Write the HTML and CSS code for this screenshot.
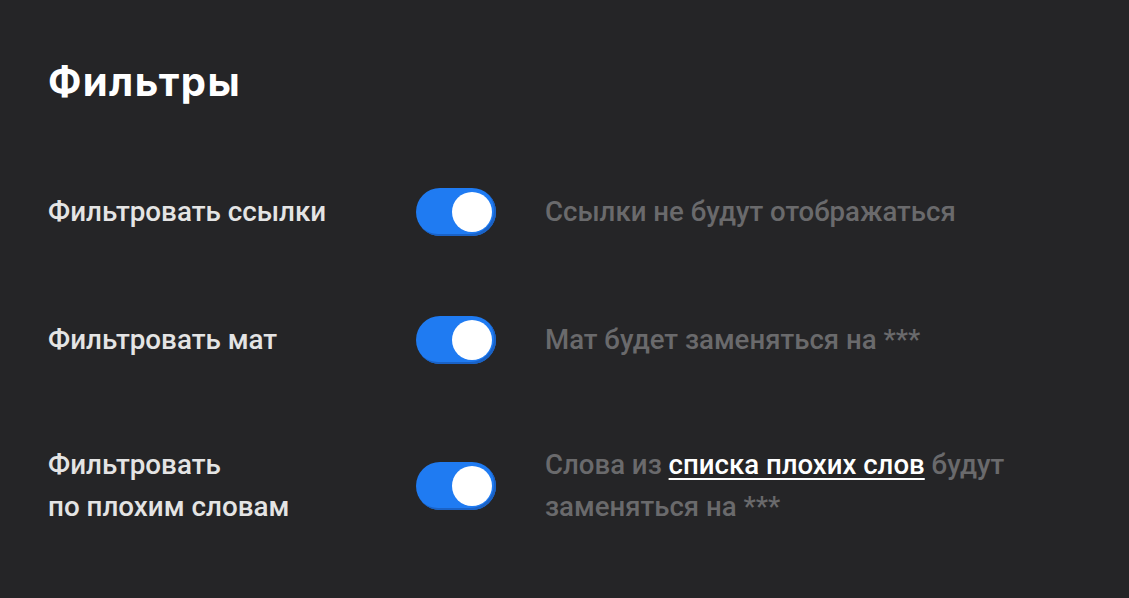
FILE: index.html
```html
<!DOCTYPE html>
<html lang="ru">
<head>
  <meta charset="UTF-8">
  <meta name="viewport" content="width=device-width, initial-scale=1.0">
  <title>Фильтры</title>
  <link rel="stylesheet" href="styles.css">
</head>
<body>
  <div class="filters">
    <h1 class="filters-title">Фильтры</h1>

    <div class="filter-row">
      <div class="filter-label">Фильтровать ссылки</div>
      <label class="switch">
        <input type="checkbox" checked>
        <span class="switch-track"></span>
      </label>
      <div class="filter-desc">Ссылки не будут отображаться</div>
    </div>

    <div class="filter-row">
      <div class="filter-label">Фильтровать мат</div>
      <label class="switch">
        <input type="checkbox" checked>
        <span class="switch-track"></span>
      </label>
      <div class="filter-desc">Мат будет заменяться на ***</div>
    </div>

    <div class="filter-row">
      <div class="filter-label">Фильтровать<br>по плохим словам</div>
      <label class="switch">
        <input type="checkbox" checked>
        <span class="switch-track"></span>
      </label>
      <div class="filter-desc">Слова из <a href="#" class="filter-link">списка плохих слов</a> будут<br>заменяться на ***</div>
    </div>
  </div>
</body>
</html>
```

FILE: styles.css
```css
body {
  margin: 0;
  padding: 0;
  background-color: #252527;
  font-family: 'Liberation Sans', Arial, sans-serif;
  -webkit-font-smoothing: antialiased;
}

.filters {
  padding: 58px 48px 0;
}

.filters-title {
  margin: 0 0 82px;
  font-family: 'Inter', sans-serif;
  font-weight: 700;
  font-size: 40px;
  line-height: 48px;
  color: #ffffff;
  letter-spacing: 1.4px;
}

.filter-row {
  display: flex;
  align-items: center;
  margin-bottom: 80px;
}

.filter-label {
  width: 368px;
  flex-shrink: 0;
  font-family: 'Roboto', sans-serif;
  font-weight: 500;
  font-size: 27.8px;
  line-height: 42px;
  color: #e4e4e4;
}

/* toggle */
.switch {
  position: relative;
  display: block;
  width: 80px;
  height: 48px;
  flex-shrink: 0;
}

.switch input {
  display: none;
}

.switch-track {
  position: absolute;
  top: 0;
  left: 0;
  width: 100%;
  height: 100%;
  border-radius: 24px;
  background-color: #1f7bf2;
  box-shadow: inset -2px -2px 0 #1a62c6;
}

.switch-track::after {
  content: '';
  position: absolute;
  top: 4px;
  left: 36px;
  width: 40px;
  height: 40px;
  border-radius: 50%;
  background-color: #ffffff;
}

.filter-desc {
  margin-left: 49px;
  font-family: 'Roboto', sans-serif;
  font-weight: 500;
  font-size: 27.6px;
  line-height: 42px;
  color: #6a6a6c;
}

.filter-link {
  color: #ffffff;
  text-decoration: underline;
  text-underline-offset: 4px;
  text-decoration-thickness: 2px;
}
```
